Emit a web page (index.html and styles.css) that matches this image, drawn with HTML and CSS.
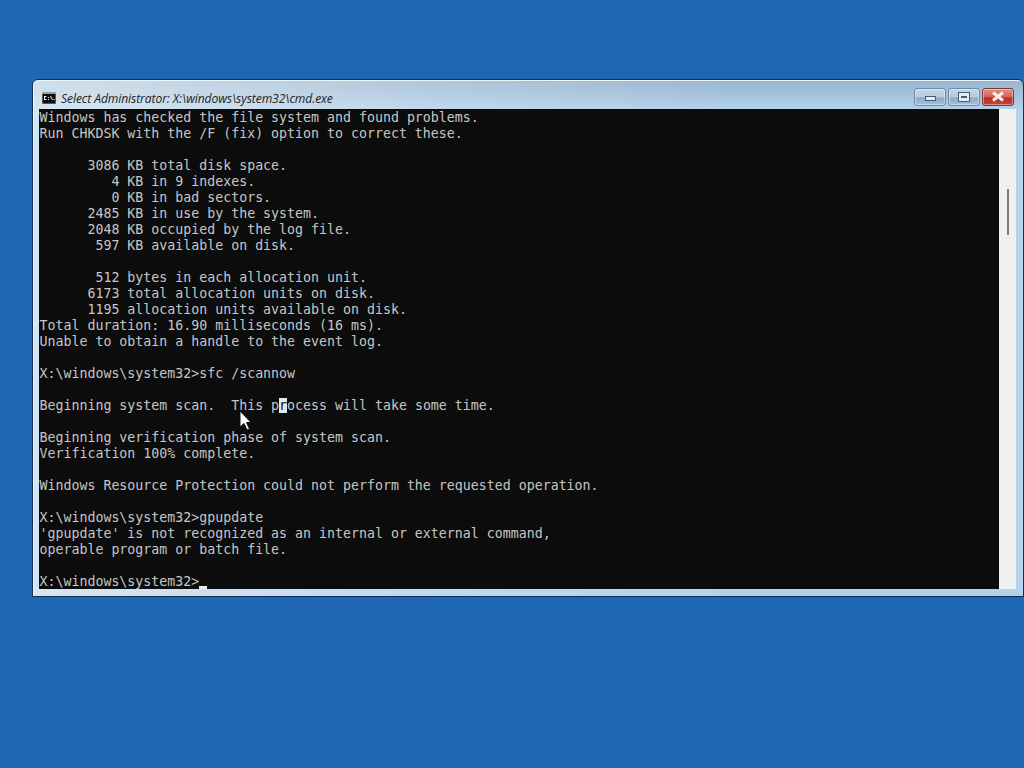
FILE: index.html
```html
<!DOCTYPE html>
<html lang="en">
<head>
<meta charset="utf-8">
<title>cmd.exe</title>
<link rel="stylesheet" href="styles.css">
</head>
<body>
<div class="window">
  <div class="titlebar">
    <svg class="app-icon" width="14" height="12" viewBox="0 0 14 12"><rect width="14" height="12" fill="#9a9ea4"/><rect x="0.500" y="2" width="13" height="9.500" fill="#0c0c0c"/><path d="M2 4h2.500v1H3v2h1.500v1H2zM6 5h1v1H6zM6 7h1v1H6zM8 4h1l2 4h-1zM11.500 7h1v1h-1z" fill="#ececec"/></svg>
    <span class="title">Select Administrator: X:\windows\system32\cmd.exe</span>
    <div class="controls">
      <div class="btn"><span class="glyph-min"></span></div>
      <div class="btn"><svg width="12" height="10" viewBox="0 0 12 10"><rect x="0.500" y="0.500" width="11" height="9" fill="#e6ecf4" stroke="#44587a"/><rect x="3" y="4" width="6" height="2" fill="#44587a"/></svg></div>
      <div class="btn btn-close"><svg width="16" height="11" viewBox="0 0 16 11"><path d="M3 1.500 8 5.500l5-4M3 9.500 8 5.500l5 4" fill="none" stroke="#f6efe9" stroke-width="3"/></svg></div>
    </div>
  </div>
  <div class="client">
<pre class="console">Windows has checked the file system and found problems.
Run CHKDSK with the /F (fix) option to correct these.

      3086 KB total disk space.
         4 KB in 9 indexes.
         0 KB in bad sectors.
      2485 KB in use by the system.
      2048 KB occupied by the log file.
       597 KB available on disk.

       512 bytes in each allocation unit.
      6173 total allocation units on disk.
      1195 allocation units available on disk.
Total duration: 16.90 milliseconds (16 ms).
Unable to obtain a handle to the event log.

X:\windows\system32&gt;sfc /scannow

Beginning system scan.  This p<span class="sel">r</span>ocess will take some time.

Beginning verification phase of system scan.
Verification 100% complete.

Windows Resource Protection could not perform the requested operation.

X:\windows\system32&gt;gpupdate
'gpupdate' is not recognized as an internal or external command,
operable program or batch file.

X:\windows\system32&gt;<span class="caret"></span></pre>
    <div class="scrollbar"><div class="thumb"></div></div>
  </div>
</div>
<svg class="pointer" width="13" height="21" viewBox="0 0 13 21"><path d="M1 1v16l4-3.500 3 6.500 2.500-1-3-6.500H12z" fill="#fff" stroke="#111" stroke-width="1"/></svg>
</body>
</html>
```
FILE: styles.css
```css
html, body {
  margin: 0;
  height: 100%;
}
body {
  position: relative;
  width: 1024px;
  height: 768px;
  overflow: hidden;
  background: #1e67b4;
}
.window {
  position: absolute;
  left: 32px;
  top: 79px;
  width: 992px;
  height: 518px;
  box-sizing: border-box;
  padding: 0 7px 7px 6px;
  display: flex;
  flex-direction: column;
  border: 1px solid #0e2f58;
  border-radius: 6px 6px 0 0;
  box-shadow: inset 1px 1px 0 #eef5fb;
  background-color: #b6d4ee;
  background-image:
    linear-gradient(90deg, rgba(225, 235, 243, .75) 0%, rgba(225, 235, 243, .3) 40%, rgba(225, 235, 243, 0) 70%),
    linear-gradient(180deg, #9ab7d0 0, #a6c2da 15px, #b4d2ec 30px);
}
.titlebar {
  height: 29px;
  display: flex;
  align-items: center;
  flex-shrink: 0;
  margin-left: 3px;
  padding-top: 7px;
  box-sizing: border-box;
}
.app-icon {
  flex-shrink: 0;
  margin-right: 5px;
}
.title {
  font-family: "Open Sans", "Noto Sans", sans-serif;
  font-style: italic;
  font-size: 12.140px;
  letter-spacing: -0.1px;
  color: #222222;
  white-space: nowrap;
}
.controls {
  margin-left: auto;
  margin-right: 2px;
  margin-top: -3px;
  display: flex;
  gap: 2px;
}
.btn {
  width: 32px;
  height: 18px;
  box-sizing: border-box;
  border: 1px solid #6b89a8;
  border-radius: 3px;
  display: flex;
  align-items: center;
  justify-content: center;
  background: linear-gradient(180deg, #c4d6e6 0%, #b4cbe0 50%, #8fa9c2 55%, #a5c0d8 100%);
  box-shadow: inset 0 0 0 1px rgba(255, 255, 255, .4);
}
.btn-close {
  border-color: #7a3a36;
  background: linear-gradient(180deg, #dd9385 0%, #d4604f 50%, #b52f25 55%, #c44538 100%);
}
.glyph-min {
  width: 11px;
  height: 5px;
  margin-top: 3px;
  box-sizing: border-box;
  background: #e6ecf4;
  border: 1px solid #44587a;
}
.client {
  flex: 1;
  min-height: 0;
  display: flex;
}
.console {
  flex: 1;
  margin: 0;
  padding: 1px 0 0 0.5px;
  width: 960px;
  overflow: hidden;
  background: #0c0c0c;
  color: #c6c6c6;
  font-family: "DejaVu Sans Mono", "Liberation Mono", monospace;
  font-size: 13.280px;
  line-height: 16px;
}
.sel {
  background: #e8e8e8;
  color: #0c0c0c;
}
.caret {
  display: inline-block;
  width: 8px;
  height: 3px;
  background: #e8e8e8;
  vertical-align: -3px;
}
.scrollbar {
  width: 17px;
  flex-shrink: 0;
  background: #f0f0f0;
  position: relative;
}
.thumb {
  position: absolute;
  left: 8px;
  top: 80px;
  width: 2px;
  height: 46px;
  background: #7d7d7d;
}
.pointer {
  position: absolute;
  left: 239px;
  top: 410px;
}
```
